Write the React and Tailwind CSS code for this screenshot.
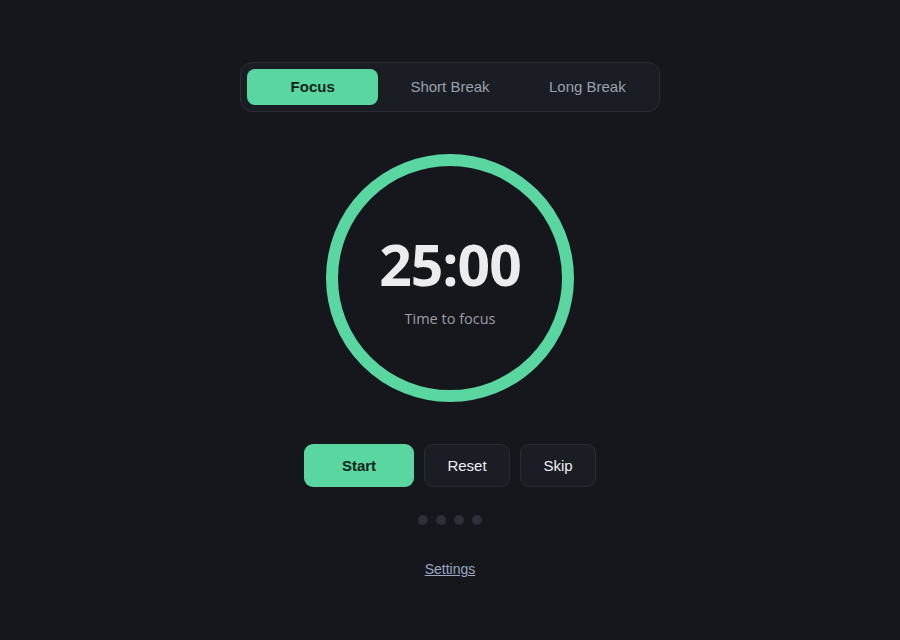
import React, { useState } from 'react';

const modes = [
  { key: 'focus', label: 'Focus' },
  { key: 'short', label: 'Short Break' },
  { key: 'long', label: 'Long Break' },
];

const App = () => {
  const [mode, setMode] = useState('focus');

  return (
    <div className="min-h-screen w-full bg-[#16171c] flex flex-col items-center pt-[62px] font-['Liberation_Sans',Arial,sans-serif]">
      {/* mode tabs */}
      <div className="w-[420px] h-[50px] rounded-[12px] border border-[#2a2d35] bg-[#1b1d24] p-[6px] grid grid-cols-3 gap-[6px]">
        {modes.map(m => (
          <button
            key={m.key}
            onClick={() => setMode(m.key)}
            className={`h-[36px] rounded-[8px] text-[15px] ${mode === m.key ? 'bg-[#5ad6a0] text-[#10241b] font-bold' : 'text-[#9aa1ad]'}`}
          >
            {m.label}
          </button>
        ))}
      </div>

      {/* timer ring */}
      <div className="mt-[42px] w-[248px] h-[248px] rounded-full border-[12px] border-[#5ad6a0] flex flex-col items-center justify-center">
        <div className="text-[57px] leading-none font-bold text-[#ececf0] font-['Open_Sans',sans-serif] tracking-[-1px] mt-[10px]">25:00</div>
        <div className="mt-[15px] text-[14.5px] text-[#9a9ea8] font-['Open_Sans',sans-serif]">Time to focus</div>
      </div>

      {/* controls */}
      <div className="mt-[42px] flex gap-[10px]">
        <button className="w-[110px] h-[43px] rounded-[9px] bg-[#5ad6a0] text-[#10241b] font-bold text-[15px] pt-[1px]">Start</button>
        <button className="w-[86px] h-[43px] rounded-[9px] bg-[#1b1d24] border border-[#2a2d35] text-[#eef0f4] text-[15px] pt-[1px]">Reset</button>
        <button className="w-[76px] h-[43px] rounded-[9px] bg-[#1b1d24] border border-[#2a2d35] text-[#eef0f4] text-[15px] pt-[1px]">Skip</button>
      </div>

      {/* session dots */}
      <div className="mt-[28px] flex gap-[8px]">
        {[0, 1, 2, 3].map(i => (
          <span key={i} className="w-[10px] h-[10px] rounded-full bg-[#2d3039]" />
        ))}
      </div>

      <a href="#" className="mt-[34px] text-[14px] text-[#9aa7c0] underline">Settings</a>
    </div>
  );
};

export default App;
